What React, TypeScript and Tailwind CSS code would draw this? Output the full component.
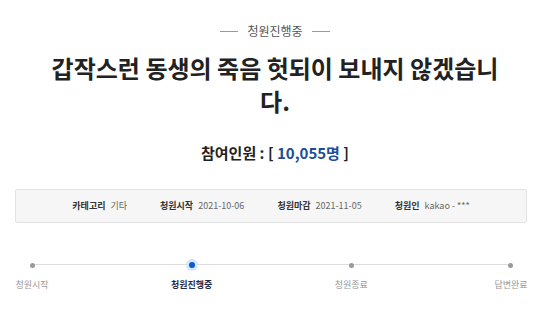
import React from "react";

const font = { fontFamily: '"Noto Sans CJK KR", "Noto Sans", sans-serif' };

function InfoItem({ label, value }: { label: string; value: string }) {
  return (
    <div className="flex items-center gap-[5px]">
      <span className="font-bold text-[#333]">{label}</span>
      <span className="text-[#666]">{value}</span>
    </div>
  );
}

function Step({ label, active }: { label: string; active?: boolean }) {
  return (
    <div className="flex w-[44px] flex-col items-center">
      <div className="flex h-[12px] w-[12px] items-center justify-center">
        {active ? (
          <div className="flex h-[12px] w-[12px] items-center justify-center rounded-full bg-[#d6e6fb]">
            <div className="h-[6px] w-[6px] rounded-full bg-[#0b5ac9]" />
          </div>
        ) : (
          <div className="h-[5px] w-[5px] rounded-full bg-[#999]" />
        )}
      </div>
      <div
        className={
          "mt-[7px] whitespace-nowrap text-[9px] leading-[14px] " +
          (active ? "font-bold text-[#1f2d4d]" : "text-[#999]")
        }
      >
        {label}
      </div>
    </div>
  );
}

export default function App() {
  return (
    <div className="h-[316px] w-[550px] overflow-hidden bg-white" style={font}>
      <div className="flex flex-col items-center pt-[22px]">
        <div className="flex h-[18px] items-center gap-[9px]">
          <div className="h-px w-[18px] bg-[#999]" />
          <span className="text-[12px] text-[#555]">청원진행중</span>
          <div className="h-px w-[18px] bg-[#999]" />
        </div>
        <h1 className="mt-[11px] text-center text-[24px] font-bold leading-[33px] text-[#222]">
          갑작스런 동생의 죽음 헛되이 보내지 않겠습니
          <br />
          다.
        </h1>
        <div className="mt-[24px] text-[15px] font-bold leading-[24px] text-[#222]">
          참여인원 : [ <span className="text-[#1a4e9a]">10,055명</span> ]
        </div>
      </div>
      <div className="mx-[15px] mt-[24px] flex h-[34px] w-[512px] items-center justify-center gap-[33px] rounded-[2px] border border-[#e3e3e3] bg-[#f6f6f6] text-[9px]">
        <InfoItem label="카테고리" value="기타" />
        <InfoItem label="청원시작" value="2021-10-06" />
        <InfoItem label="청원마감" value="2021-11-05" />
        <InfoItem label="청원인" value="kakao - ***" />
      </div>
      <div className="relative mx-[10px] mt-[36px] flex w-[523px] justify-between">
        <div className="absolute left-[22px] right-[22px] top-[5px] h-px bg-[#ddd]" />
        <div className="relative flex w-full justify-between">
          <Step label="청원시작" />
          <Step label="청원진행중" active />
          <Step label="청원종료" />
          <Step label="답변완료" />
        </div>
      </div>
    </div>
  );
}
